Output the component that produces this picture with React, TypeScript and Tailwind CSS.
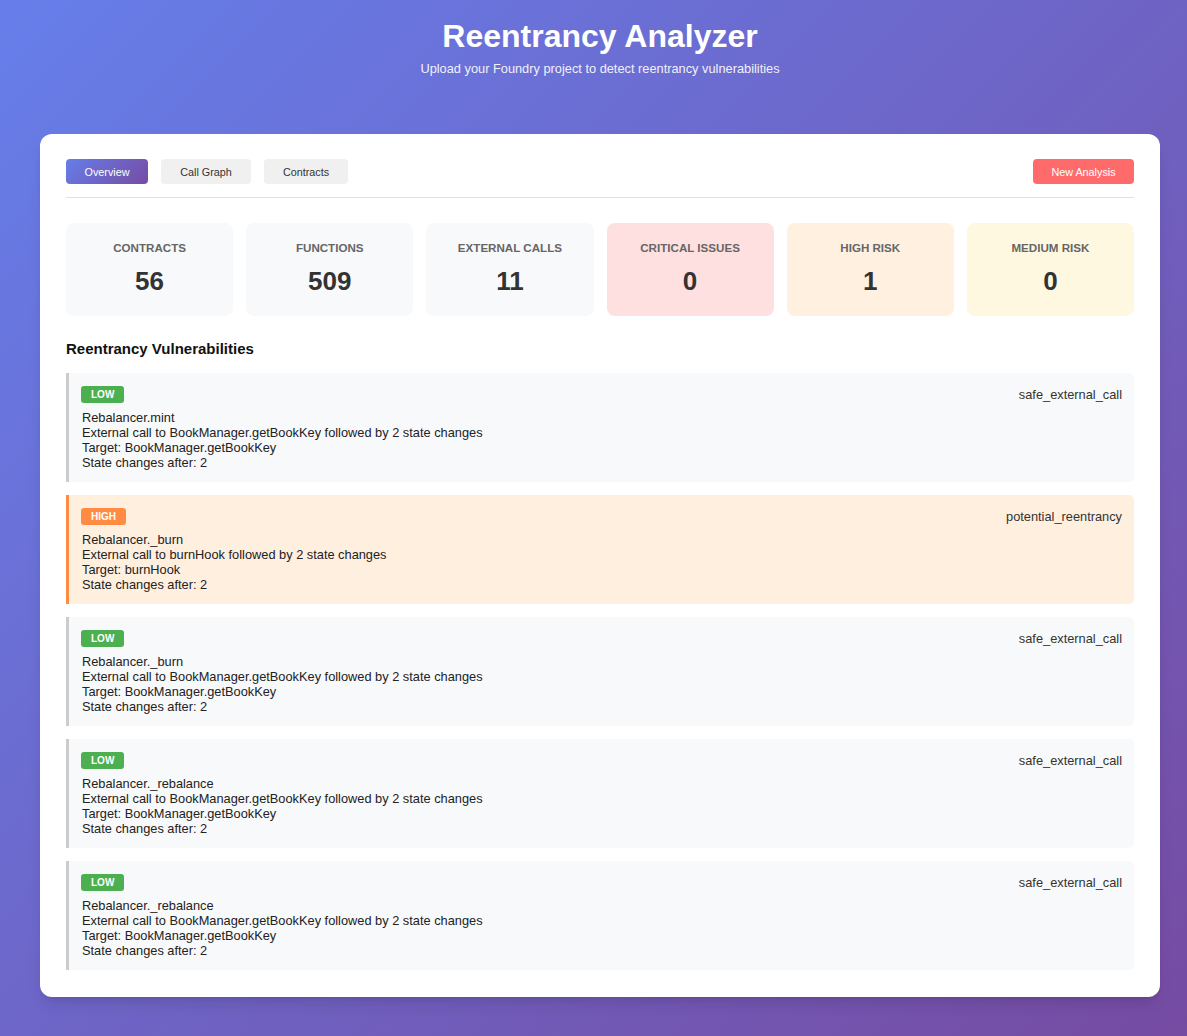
import React from "react";

type Stat = { label: string; value: number; tone: string };
type Finding = {
  severity: "LOW" | "HIGH";
  kind: string;
  fn: string;
  target: string;
  changes: number;
};

const stats: Stat[] = [
  { label: "Contracts", value: 56, tone: "bg-[#f8f9fa]" },
  { label: "Functions", value: 509, tone: "bg-[#f8f9fa]" },
  { label: "External Calls", value: 11, tone: "bg-[#f8f9fa]" },
  { label: "Critical Issues", value: 0, tone: "bg-[#ffe0e1]" },
  { label: "High Risk", value: 1, tone: "bg-[#fff0e0]" },
  { label: "Medium Risk", value: 0, tone: "bg-[#fff8e1]" },
];

const findings: Finding[] = [
  { severity: "LOW", kind: "safe_external_call", fn: "Rebalancer.mint", target: "BookManager.getBookKey", changes: 2 },
  { severity: "HIGH", kind: "potential_reentrancy", fn: "Rebalancer._burn", target: "burnHook", changes: 2 },
  { severity: "LOW", kind: "safe_external_call", fn: "Rebalancer._burn", target: "BookManager.getBookKey", changes: 2 },
  { severity: "LOW", kind: "safe_external_call", fn: "Rebalancer._rebalance", target: "BookManager.getBookKey", changes: 2 },
  { severity: "LOW", kind: "safe_external_call", fn: "Rebalancer._rebalance", target: "BookManager.getBookKey", changes: 2 },
];

const FindingRow: React.FC<{ f: Finding }> = ({ f }) => {
  const high = f.severity === "HIGH";
  return (
    <div
      className={`border-l-[3px] rounded-r-[5px] pl-[12px] pr-3 pt-[13px] pb-3 ${
        high ? "border-[#ff8c42] bg-[#ffefdf]" : "border-[#cccccc] bg-[#f8f9fa]"
      }`}
    >
      <div className="flex items-center justify-between h-[17px]">
        <span
          className={`h-[17px] px-[10px] rounded-[3px] text-[10px] font-bold text-white leading-[17px] ${
            high ? "bg-[#ff8c42]" : "bg-[#4caf50]"
          }`}
        >
          {f.severity}
        </span>
        <span className="text-[12.8px] text-[#333]">{f.kind}</span>
      </div>
      <div className="mt-[7px] pl-[1px] text-[12.8px] leading-[15px] text-[#222]">
        <div>{f.fn}</div>
        <div>External call to {f.target} followed by {f.changes} state changes</div>
        <div>Target: {f.target}</div>
        <div>State changes after: {f.changes}</div>
      </div>
    </div>
  );
};

export default function App() {
  return (
    <div
      className="min-h-screen w-full overflow-hidden bg-[linear-gradient(135deg,#667eea_0%,#764ba2_100%)]"
      style={{ fontFamily: '"Liberation Sans", Arial, sans-serif' }}
    >
      <div className="w-[1200px] px-10 pt-[18px] pb-[39px]">
        {/* Header */}
        <header className="text-center text-white">
          <h1 className="text-[32px] leading-[37px] font-bold">Reentrancy Analyzer</h1>
          <p className="mt-[6px] text-[12.8px] leading-4 opacity-90">
            Upload your Foundry project to detect reentrancy vulnerabilities
          </p>
        </header>

        {/* Main card */}
        <main className="mt-[57px] bg-white rounded-xl px-[26px] pt-[25px] pb-[27px] shadow-lg">
          <div className="flex items-center justify-between pb-[13px] border-b border-[#e0e0e0]">
            <div className="flex items-center gap-[13px]">
              <button className="h-[25px] w-[82px] pt-[1px] rounded text-[10.8px] text-white bg-[linear-gradient(135deg,#667eea_0%,#764ba2_100%)]">
                Overview
              </button>
              <button className="h-[25px] w-[90px] pt-[1px] rounded text-[10.8px] text-[#333] bg-[#f0f0f0]">
                Call Graph
              </button>
              <button className="h-[25px] w-[84px] pt-[1px] rounded text-[10.8px] text-[#333] bg-[#f0f0f0]">
                Contracts
              </button>
            </div>
            <button className="h-[25px] w-[101px] pt-[1px] rounded text-[10.8px] text-white bg-[#ff6b6b]">
              New Analysis
            </button>
          </div>

          {/* Stats */}
          <div className="mt-[25px] grid grid-cols-6 gap-[13px]">
            {stats.map((s) => (
              <div key={s.label} className={`${s.tone} rounded-lg pt-[18px] pb-5 text-center`}>
                <div className="text-[11.6px] leading-[13px] font-bold uppercase text-[#666]">{s.label}</div>
                <div className="mt-[12px] text-[26px] leading-[30px] font-bold text-[#333]">{s.value}</div>
              </div>
            ))}
          </div>

          {/* Vulnerabilities */}
          <h2 className="mt-6 mb-[15px] text-[15px] leading-[18px] font-bold text-[#111]">
            Reentrancy Vulnerabilities
          </h2>
          <div className="flex flex-col gap-[13px]">
            {findings.map((f, i) => (
              <FindingRow key={i} f={f} />
            ))}
          </div>
        </main>
      </div>
    </div>
  );
}
